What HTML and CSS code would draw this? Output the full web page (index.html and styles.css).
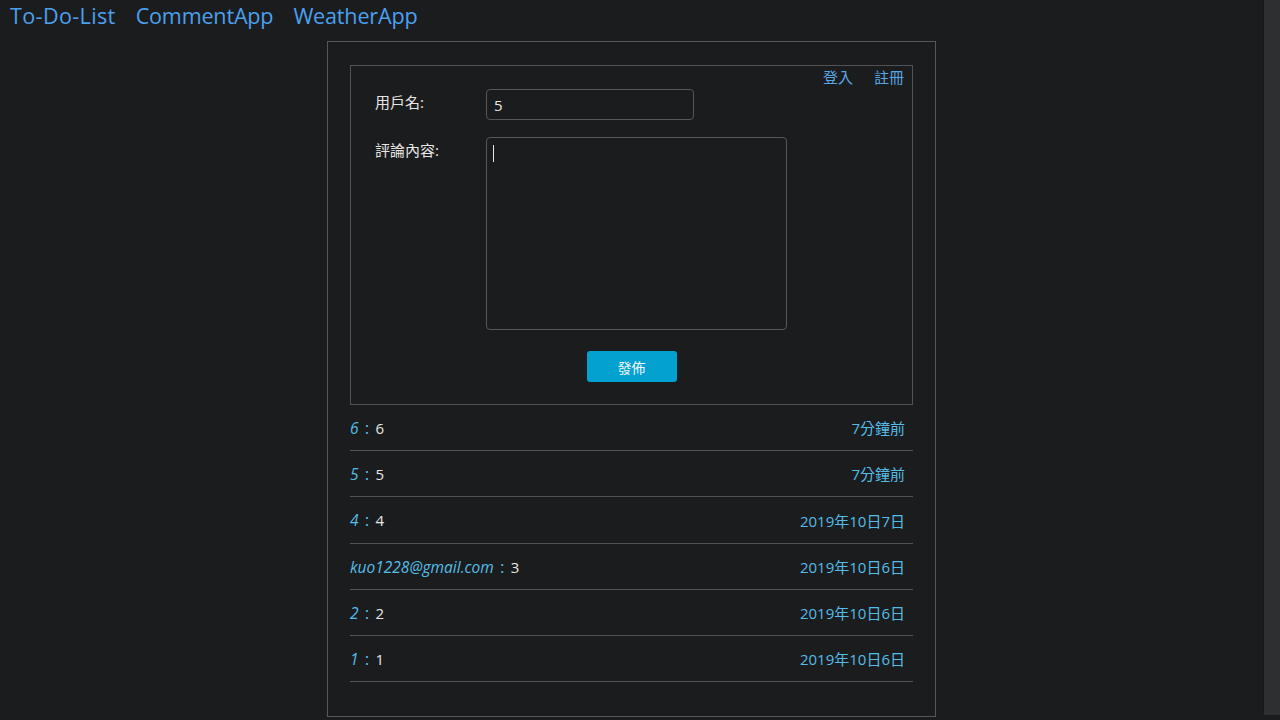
FILE: index.html
```html
<!DOCTYPE html>
<html lang="zh-Hant">
<head>
<meta charset="utf-8">
<title>CommentApp</title>
<link rel="stylesheet" href="styles.css">
</head>
<body>
<div class="page">
  <nav class="nav">
    <a class="nav-link nav-link-wide" href="#">To-Do-List</a>
    <a class="nav-link" href="#">CommentApp</a>
    <a class="nav-link" href="#">WeatherApp</a>
  </nav>
  <main class="card">
    <section class="form-box">
      <div class="auth">
        <a class="auth-link" href="#">登入</a>
        <a class="auth-link" href="#">註冊</a>
      </div>
      <div class="field">
        <label class="label">用戶名:</label>
        <input class="input" type="text" value="5">
      </div>
      <div class="field">
        <label class="label">評論內容:</label>
        <div class="textarea-wrap">
          <textarea class="textarea"></textarea>
        </div>
      </div>
      <div class="actions">
        <button class="btn" type="button">發佈</button>
      </div>
    </section>
    <ul class="comments">
      <li class="comment"><span class="who"><span class="name">6</span><span class="colon">：</span><span class="text">6</span></span><span class="time">7分鐘前</span></li>
      <li class="comment"><span class="who"><span class="name">5</span><span class="colon">：</span><span class="text">5</span></span><span class="time">7分鐘前</span></li>
      <li class="comment comment-tall"><span class="who"><span class="name">4</span><span class="colon">：</span><span class="text">4</span></span><span class="time">2019年10日7日</span></li>
      <li class="comment"><span class="who"><span class="name">kuo1228@gmail.com</span><span class="colon">：</span><span class="text">3</span></span><span class="time">2019年10日6日</span></li>
      <li class="comment"><span class="who"><span class="name">2</span><span class="colon">：</span><span class="text">2</span></span><span class="time">2019年10日6日</span></li>
      <li class="comment"><span class="who"><span class="name">1</span><span class="colon">：</span><span class="text">1</span></span><span class="time">2019年10日6日</span></li>
    </ul>
  </main>
</div>
<div class="scrollbar"></div>
</body>
</html>
```

FILE: styles.css
```css
html, body {
  margin: 0;
  padding: 0;
  height: 100%;
  overflow: hidden;
}
body {
  background: #1b1c1e;
  color: #e8e6e3;
  font-family: "Open Sans", "Noto Sans CJK TC", sans-serif;
}
.page {
  width: calc(100% - 17px);
}
.nav {
  display: flex;
  gap: 20px;
  padding: 1px 0 0 10px;
  height: 39px;
  box-sizing: border-box;
}
.nav-link {
  color: #4aa0ee;
  text-decoration: none;
  font-size: 21.6px;
  line-height: 30px;
  letter-spacing: -0.2px;
}
.nav-link-wide {
  letter-spacing: 0.35px;
}
.card {
  width: 563px;
  margin: 2px auto 0;
  border: 1px solid #555759;
  padding: 23px 22px 34px;
}
.form-box {
  border: 1px solid #505254;
  height: 338px;
  box-sizing: content-box;
  display: flex;
  flex-direction: column;
  padding: 0 8px 0 24px;
}
.auth {
  display: flex;
  justify-content: flex-end;
  gap: 21px;
  height: 23px;
}
.auth-link {
  color: #5aa6e4;
  text-decoration: none;
  font-size: 15px;
  line-height: 22px;
}
.field {
  display: flex;
  align-items: flex-start;
  margin-bottom: 17px;
}
.label {
  width: 111px;
  font-size: 15px;
  line-height: 20px;
  padding-top: 3px;
  color: #e8e6e3;
}
.input {
  width: 208px;
  height: 31px;
  box-sizing: border-box;
  background: #1b1c1e;
  border: 1px solid #555759;
  border-radius: 4px;
  color: #e8e6e3;
  font-family: "Open Sans", sans-serif;
  font-size: 15px;
  padding: 0 7px;
  outline: none;
}
.textarea-wrap {
  position: relative;
}
.textarea-wrap::after {
  content: "";
  position: absolute;
  left: 7px;
  top: 8px;
  width: 1px;
  height: 17px;
  background: #e8e6e3;
}
.textarea {
  display: block;
  width: 301px;
  height: 193px;
  box-sizing: border-box;
  background: #1b1c1e;
  border: 1px solid #555759;
  border-radius: 4px;
  color: #e8e6e3;
  resize: none;
  outline: none;
}
.actions {
  display: flex;
  justify-content: center;
  margin: 4px 0 0 -16px;
}
.btn {
  width: 90px;
  height: 31px;
  border: none;
  border-radius: 3px;
  background: #03a1cf;
  color: #eef6fa;
  font-family: "Noto Sans CJK TC", sans-serif;
  font-size: 14px;
  padding: 0;
}
.comments {
  list-style: none;
  margin: 0;
  padding: 0;
}
.comment {
  display: flex;
  justify-content: space-between;
  align-items: center;
  height: 45px;
  border-bottom: 1px solid #505254;
  padding-right: 8px;
  font-size: 15px;
}
.comment-tall {
  height: 46px;
}
.name {
  color: #55bce6;
  font-style: italic;
  font-size: 15.5px;
}
.colon {
  color: #55bce6;
  font-size: 13px;
  margin: 0 2px 0 2px;
}
.text {
  color: #e8e6e3;
}
.time {
  color: #55bce6;
}
.scrollbar {
  position: fixed;
  top: 0;
  right: 0;
  width: 17px;
  height: 715px;
  background: #2e2f31;
  border-left: 1px solid #161718;
  box-sizing: border-box;
}
```
